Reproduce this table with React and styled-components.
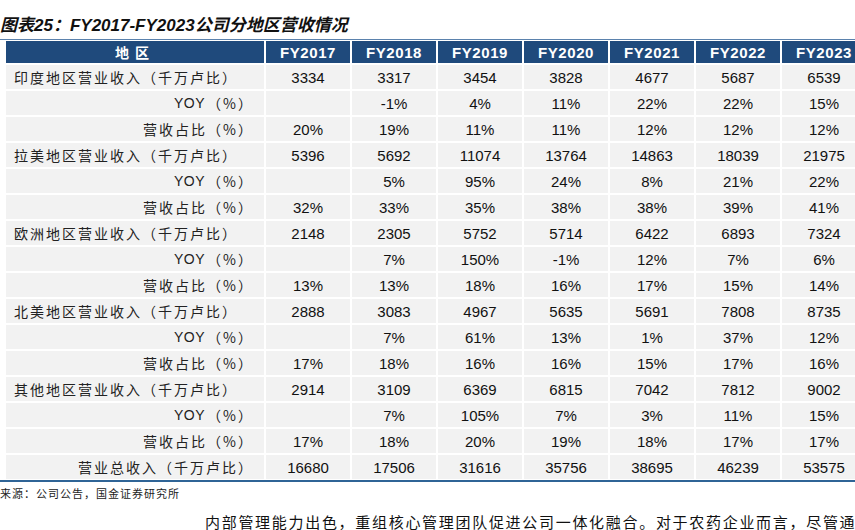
import styled, { createGlobalStyle } from "styled-components";

const GlobalStyle = createGlobalStyle`
  html, body {
    margin: 0;
    padding: 0;
    background: #fff;
  }
  body {
    font-family: "Liberation Sans", "Noto Sans CJK SC", sans-serif;
    color: #111;
  }
`;

const Page = styled.div`
  width: 855px;
  height: 530px;
  overflow: hidden;
`;

const Title = styled.div`
  padding-top: 17px;
  height: 22px;
  line-height: 18px;
  font-size: 17px;
  font-weight: bold;
  font-style: italic;
  color: #111;
  white-space: nowrap;
`;

const TableWrap = styled.div`
  border-top: 1px solid #5b82ad;
  border-bottom: 2px solid #2f6496;
  padding: 1px 0 1px 6px;
  overflow: hidden;
`;

const Grid = styled.div`
  display: grid;
  grid-template-columns: 258px repeat(7, 84px);
  grid-template-rows: 22px;
  grid-auto-rows: 24px;
  gap: 2px;
  width: 866px;
`;

const HeadCell = styled.div`
  background: #1f4a7c;
  color: #fff;
  display: flex;
  align-items: center;
  justify-content: center;
  font-size: ${(p) => (p.$cjk ? "14px" : "15px")};
  font-weight: bold;
  letter-spacing: ${(p) => (p.$cjk ? "6px" : "0.6px")};
  font-family: ${(p) =>
    p.$cjk ? '"Noto Sans CJK SC", sans-serif' : '"Liberation Sans", sans-serif'};
`;

const Label = styled.div`
  background: #f2f2f2;
  display: flex;
  align-items: center;
  justify-content: ${(p) => (p.$right ? "flex-end" : "flex-start")};
  padding: ${(p) => (p.$right ? "0 10px 0 0" : "0 0 0 8px")};
  font-family: "Noto Sans CJK SC", sans-serif;
  font-size: 14px;
  letter-spacing: 2px;
  white-space: nowrap;
  color: #222;
`;

const Latin = styled.span`
  font-family: "Liberation Sans", sans-serif;
  letter-spacing: 0.5px;
  margin-right: 2px;
`;

const Cell = styled.div`
  background: #f2f2f2;
  display: flex;
  align-items: center;
  justify-content: center;
  font-family: "Liberation Sans", sans-serif;
  font-size: 15px;
  color: #111;
`;

const Source = styled.div`
  margin-top: 4px;
  line-height: 14px;
  font-size: 11px;
  letter-spacing: 1px;
  font-family: "Noto Sans CJK SC", sans-serif;
  color: #222;
  white-space: nowrap;
`;

const Body = styled.div`
  margin-top: 12px;
  padding-left: 205px;
  line-height: 20px;
  font-size: 15px;
  letter-spacing: 1.7px;
  font-family: "Noto Sans CJK SC", sans-serif;
  color: #111;
  white-space: nowrap;
`;

const years = ["FY2017", "FY2018", "FY2019", "FY2020", "FY2021", "FY2022", "FY2023"];

const regions = [
  {
    name: "印度地区营业收入（千万卢比）",
    rev: ["3334", "3317", "3454", "3828", "4677", "5687", "6539"],
    yoy: ["", "-1%", "4%", "11%", "22%", "22%", "15%"],
    share: ["20%", "19%", "11%", "11%", "12%", "12%", "12%"],
  },
  {
    name: "拉美地区营业收入（千万卢比）",
    rev: ["5396", "5692", "11074", "13764", "14863", "18039", "21975"],
    yoy: ["", "5%", "95%", "24%", "8%", "21%", "22%"],
    share: ["32%", "33%", "35%", "38%", "38%", "39%", "41%"],
  },
  {
    name: "欧洲地区营业收入（千万卢比）",
    rev: ["2148", "2305", "5752", "5714", "6422", "6893", "7324"],
    yoy: ["", "7%", "150%", "-1%", "12%", "7%", "6%"],
    share: ["13%", "13%", "18%", "16%", "17%", "15%", "14%"],
  },
  {
    name: "北美地区营业收入（千万卢比）",
    rev: ["2888", "3083", "4967", "5635", "5691", "7808", "8735"],
    yoy: ["", "7%", "61%", "13%", "1%", "37%", "12%"],
    share: ["17%", "18%", "16%", "16%", "15%", "17%", "16%"],
  },
  {
    name: "其他地区营业收入（千万卢比）",
    rev: ["2914", "3109", "6369", "6815", "7042", "7812", "9002"],
    yoy: ["", "7%", "105%", "7%", "3%", "11%", "15%"],
    share: ["17%", "18%", "20%", "19%", "18%", "17%", "17%"],
  },
];

const total = ["16680", "17506", "31616", "35756", "38695", "46239", "53575"];

const rows = regions.flatMap((r) => [
  { label: r.name, values: r.rev },
  { label: <><Latin>YOY</Latin>（%）</>, values: r.yoy, right: true },
  { label: "营收占比（%）", values: r.share, right: true },
]);
rows.push({ label: "营业总收入（千万卢比）", values: total, right: true });

const App = () => {
  return (
    <Page>
      <GlobalStyle />
      <Title>图表25：FY2017-FY2023公司分地区营收情况</Title>
      <TableWrap>
        <Grid>
          <HeadCell $cjk>地区</HeadCell>
          {years.map((y) => (
            <HeadCell key={y}>{y}</HeadCell>
          ))}
          {rows.map((row, i) => [
            <Label key={"l" + i} $right={row.right}>
              {row.label}
            </Label>,
            ...row.values.map((v, j) => <Cell key={i + "-" + j}>{v}</Cell>),
          ])}
        </Grid>
      </TableWrap>
      <Source>来源：公司公告，国金证券研究所</Source>
      <Body>
        内部管理能力出色，重组核心管理团队促进公司一体化融合。对于农药企业而言，尽管通
      </Body>
    </Page>
  );
};

export default App;
